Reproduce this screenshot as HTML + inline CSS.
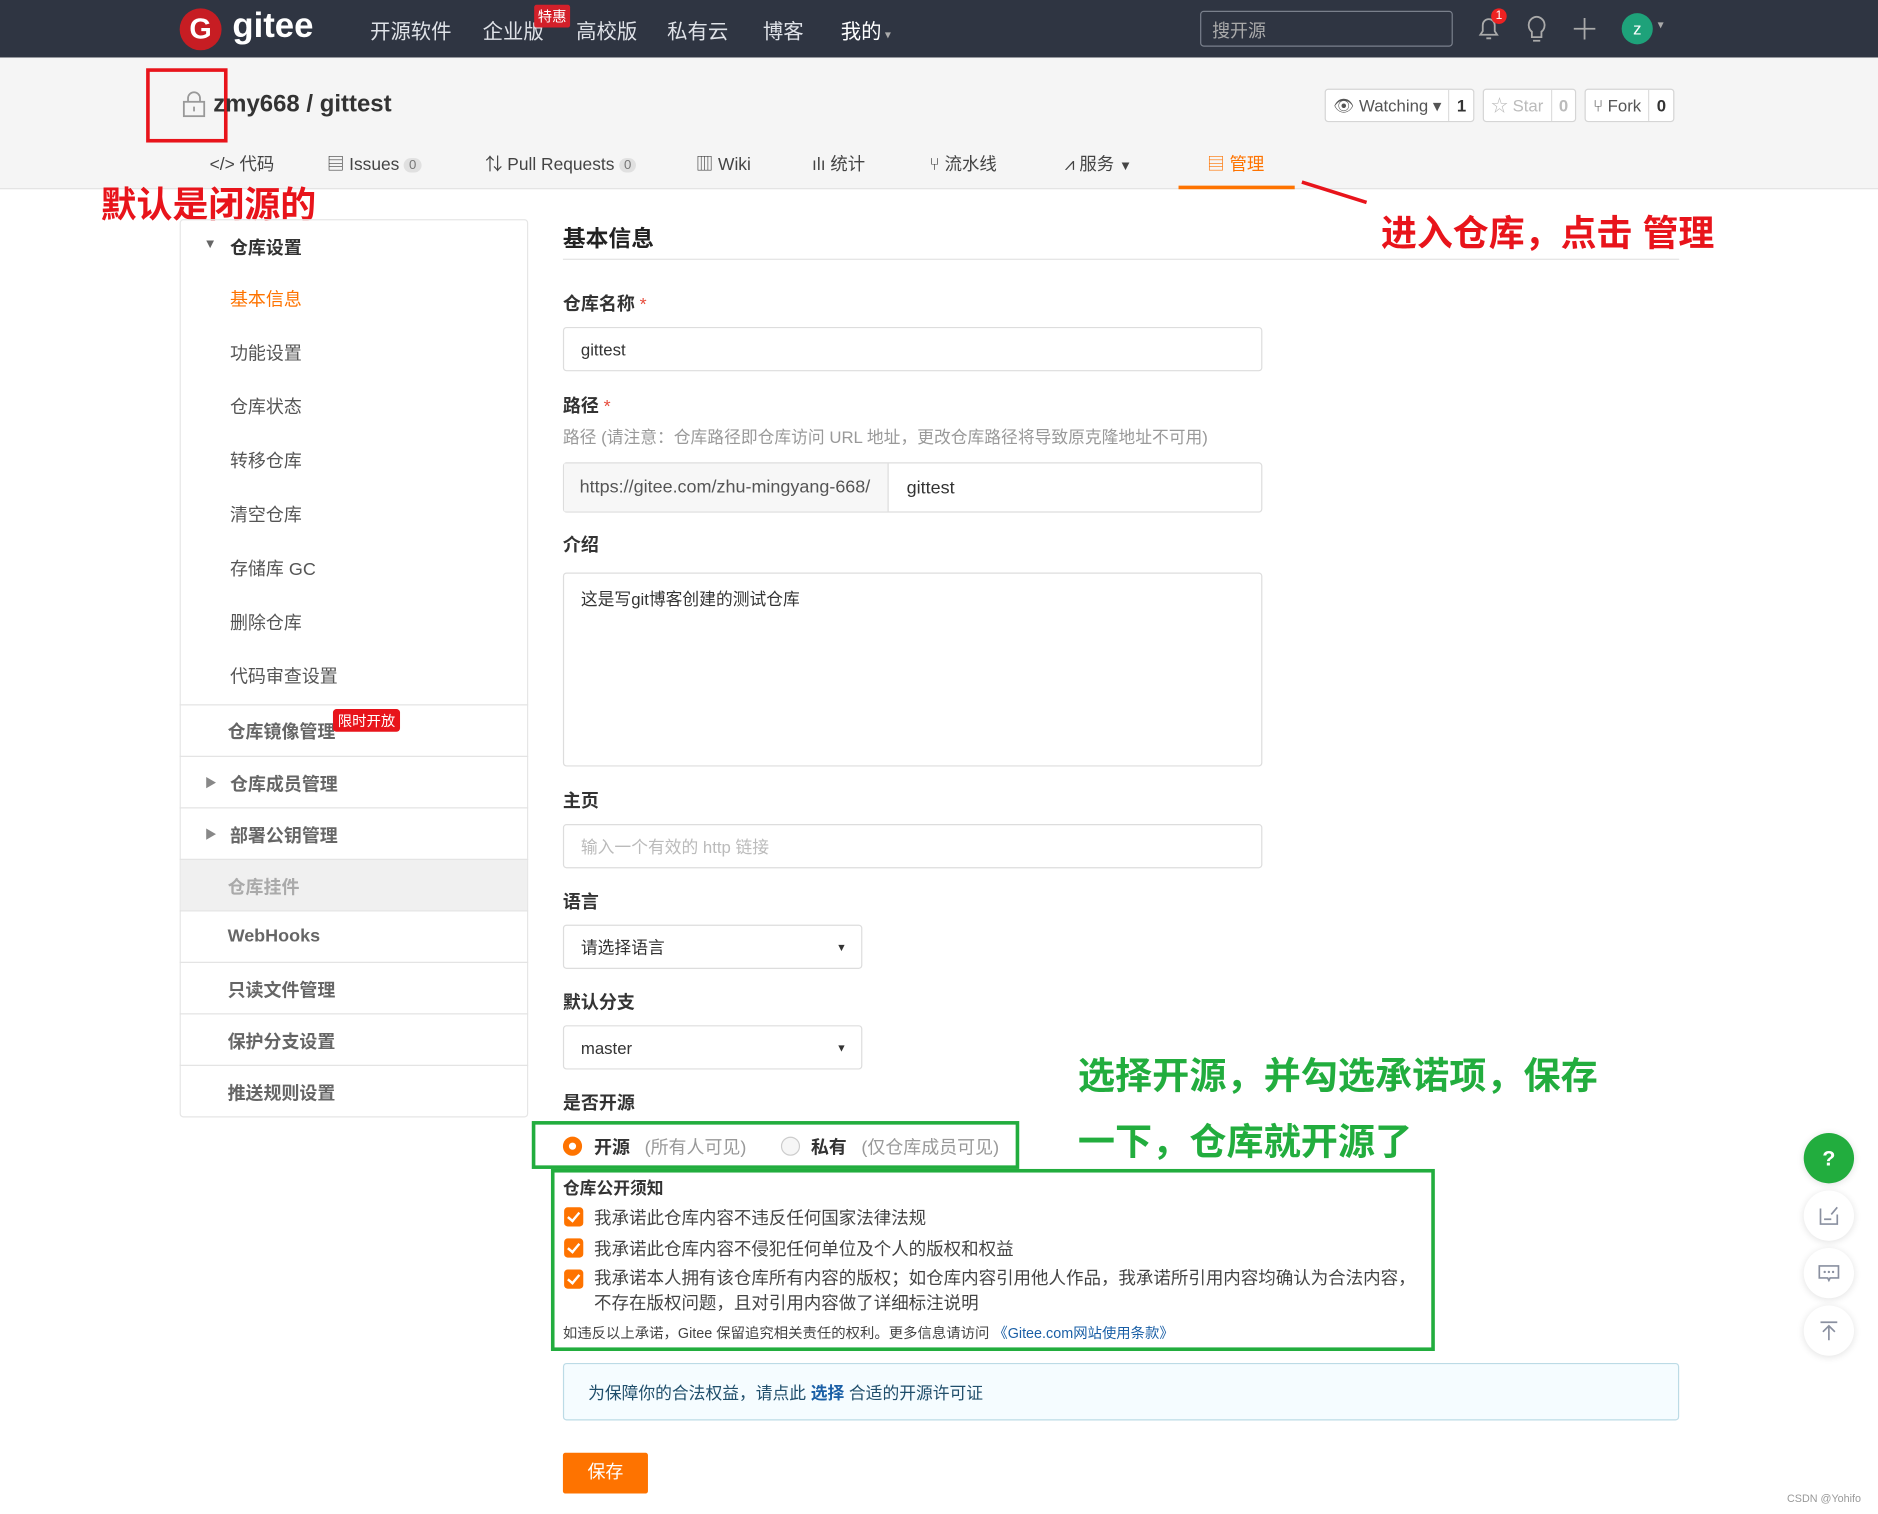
<!DOCTYPE html>
<html><head><meta charset="utf-8">
<style>
*{box-sizing:border-box;margin:0;padding:0}
html,body{width:1878px;height:1514px;overflow:hidden;background:#fff}
body{font-family:"Liberation Sans","Noto Sans CJK SC",sans-serif;color:#333}
#s{position:absolute;left:0;top:0;width:1568px;height:1264px;transform:scale(1.19770);transform-origin:0 0;background:#fff}
.a{position:absolute;white-space:nowrap}
.hd{left:0;top:0;width:1568px;height:48px;background:#2f3542}
.nav{color:#dfe2e8;font-size:17px;top:12px}
.sub{left:0;top:48px;width:1568px;height:110px;background:#f5f5f5;border-bottom:1px solid #e3e3e3}
.tab{top:126px;font-size:14.5px;color:#444}
.bdg{display:inline-block;background:#e0e0e0;border-radius:8px;font-size:11px;padding:0 4px;color:#777;margin-left:4px;vertical-align:1px}
.btn{border:1px solid #d5d5d5;background:#fff;height:28px;top:74px;font-size:14px;color:#555;display:flex;align-items:center;border-radius:3px}
.btn span{padding:0 6px;height:26px;line-height:26px}
.btn b{border-left:1px solid #ddd;padding:0 6px;line-height:26px;color:#333}
.sb{left:150px;top:183px;width:291px;height:750px;border:1px solid #e6e6e6;border-radius:3px}
.si{left:192px;font-size:15px;color:#555}
.sl{left:150px;width:291px;height:1px;background:#e3e3e3}
.sg{left:190px;font-size:15px;color:#666;font-weight:bold}
.lb{left:470px;font-size:15px;font-weight:bold;color:#333}
.st{color:#e74c3c;font-weight:normal;margin-left:4px}
.in{left:470px;width:584px;border:1px solid #ddd;border-radius:3px;font-size:14px;padding-left:14px;display:flex;align-items:center;color:#333}
.red{color:#e8141b;font-weight:bold;font-size:30px}
.grn{color:#22ad3e;font-weight:bold;font-size:31px}
.cb{width:16px;height:16px;background:#fe7300;border-radius:3px;left:471px}
.cb:after{content:"";position:absolute;left:5px;top:2px;width:4px;height:8px;border:solid #fff;border-width:0 2px 2px 0;transform:rotate(40deg)}
.ct{left:496px;font-size:14.6px;color:#444}
.fl{left:1506px;width:42px;height:42px;border-radius:50%;background:#fff;box-shadow:0 1px 6px rgba(0,0,0,.12);display:flex;align-items:center;justify-content:center}
</style></head><body><div id="s">
<div class="a hd"></div>
<div class="a" style="left:150px;top:7px;width:35px;height:35px;border-radius:50%;background:#c71d23;color:#fff;font-weight:bold;font-size:24px;text-align:center;line-height:35px">G</div>
<div class="a" style="left:194px;top:5px;color:#fff;font-weight:bold;font-size:29px;line-height:34px">gitee</div>
<div class="a nav" style="left:309px">开源软件</div>
<div class="a nav" style="left:403px">企业版</div>
<div class="a" style="left:446px;top:4px;background:#d3202a;color:#fff;font-size:12px;padding:1px 3px;border-radius:2px">特惠</div>
<div class="a nav" style="left:481px">高校版</div>
<div class="a nav" style="left:557px">私有云</div>
<div class="a nav" style="left:637px">博客</div>
<div class="a nav" style="left:702px;color:#fff">我的<span style="font-size:10px;color:#aaa"> ▾</span></div>
<div class="a" style="left:1002px;top:9px;width:211px;height:30px;border:1px solid #7a808c;border-radius:3px;color:#aaa;font-size:15px;padding:5px 9px">搜开源</div>
<svg class="a" style="left:1232px;top:12px" width="22" height="24" viewBox="0 0 22 24"><path d="M4 17h14l-2-3V9a5 5 0 0 0-10 0v5z M9 20h4" fill="none" stroke="#aaa" stroke-width="1.5"/></svg>
<div class="a" style="left:1245px;top:7px;width:13px;height:13px;border-radius:50%;background:#e22;color:#fff;font-size:10px;text-align:center;line-height:13px">1</div>
<svg class="a" style="left:1272px;top:12px" width="22" height="26" viewBox="0 0 22 26"><path d="M11 2a7 7 0 0 0-4 12.5V19h8v-4.5A7 7 0 0 0 11 2z M8 22h6" fill="none" stroke="#aaa" stroke-width="1.5"/></svg>
<svg class="a" style="left:1313px;top:14px" width="20" height="20"><path d="M10 1v18M1 10h18" stroke="#aaa" stroke-width="1.5"/></svg>
<div class="a" style="left:1354px;top:11px;width:26px;height:26px;border-radius:50%;background:#1ea27a;color:#fff;font-size:14px;text-align:center;line-height:26px">z</div>
<div class="a" style="left:1384px;top:16px;color:#aaa;font-size:10px">▾</div>

<div class="a sub"></div>
<div class="a" style="left:122px;top:57px;width:68px;height:62px;border:3px solid #e8141b"></div>
<svg class="a" style="left:152px;top:76px" width="20" height="22" viewBox="0 0 20 22"><rect x="1.5" y="9" width="17" height="12" fill="none" stroke="#999" stroke-width="1.5"/><path d="M5 9V6a5 5 0 0 1 10 0v3" fill="none" stroke="#999" stroke-width="1.5"/><path d="M10 13v4" stroke="#999" stroke-width="1.5"/></svg>
<div class="a" style="left:178px;top:76px;font-size:20px;font-weight:bold;color:#333">zmy668 / gittest</div>
<div class="a btn" style="left:1106px"><span>👁 Watching ▾</span><b>1</b></div>
<div class="a btn" style="left:1238px;color:#bbb"><span>☆ Star</span><b style="color:#bbb">0</b></div>
<div class="a btn" style="left:1323px"><span>⑂ Fork</span><b>0</b></div>
<div class="a tab" style="left:175px">&lt;/&gt; 代码</div>
<div class="a tab" style="left:273px">▤ Issues<span class="bdg">0</span></div>
<div class="a tab" style="left:405px">⇅ Pull Requests<span class="bdg">0</span></div>
<div class="a tab" style="left:581px">▥ Wiki</div>
<div class="a tab" style="left:678px">ılı 统计</div>
<div class="a tab" style="left:776px">⑂ 流水线</div>
<div class="a tab" style="left:889px">⩘ 服务 <span style="font-size:11px">▼</span></div>
<div class="a tab" style="left:1008px;color:#fe7300">▤ 管理</div>
<div class="a" style="left:984px;top:155px;width:97px;height:3px;background:#fe7300"></div>
<svg class="a" style="left:1085px;top:150px" width="60" height="22"><path d="M2 2L56 19" stroke="#e8141b" stroke-width="3"/></svg>
<div class="a red" style="left:84px;top:146px">默认是闭源的</div>
<div class="a red" style="left:1153px;top:170px">进入仓库，点击 管理</div>

<div class="a sb"></div>
<div class="a" style="left:170px;top:198px;font-size:11px;color:#666">▼</div>
<div class="a si" style="top:196px;color:#333;font-weight:bold">仓库设置</div>
<div class="a si" style="top:239px;color:#fe7300">基本信息</div>
<div class="a si" style="top:284px">功能设置</div>
<div class="a si" style="top:329px">仓库状态</div>
<div class="a si" style="top:374px">转移仓库</div>
<div class="a si" style="top:419px">清空仓库</div>
<div class="a si" style="top:464px">存储库 GC</div>
<div class="a si" style="top:509px">删除仓库</div>
<div class="a si" style="top:554px">代码审查设置</div>
<div class="a sl" style="top:588px"></div>
<div class="a sg" style="top:600px">仓库镜像管理</div>
<div class="a" style="left:278px;top:592px;background:#e8141b;color:#fff;font-size:12px;padding:1px 4px;border-radius:3px">限时开放</div>
<div class="a sl" style="top:631px"></div>
<div class="a" style="left:171px;top:645px;font-size:10px;color:#888">▶</div>
<div class="a sg" style="top:644px;left:192px">仓库成员管理</div>
<div class="a sl" style="top:674px"></div>
<div class="a" style="left:171px;top:688px;font-size:10px;color:#888">▶</div>
<div class="a sg" style="top:687px;left:192px">部署公钥管理</div>
<div class="a sl" style="top:717px"></div>
<div class="a" style="left:151px;top:718px;width:289px;height:42px;background:#f0f0f0"></div>
<div class="a sg" style="top:730px;color:#aaa">仓库挂件</div>
<div class="a sl" style="top:760px"></div>
<div class="a sg" style="top:773px">WebHooks</div>
<div class="a sl" style="top:803px"></div>
<div class="a sg" style="top:816px">只读文件管理</div>
<div class="a sl" style="top:846px"></div>
<div class="a sg" style="top:859px">保护分支设置</div>
<div class="a sl" style="top:889px"></div>
<div class="a sg" style="top:902px">推送规则设置</div>

<div class="a" style="left:470px;top:185px;font-size:19px;font-weight:bold;color:#222">基本信息</div>
<div class="a" style="left:470px;top:216px;width:932px;height:1px;background:#e3e3e3"></div>
<div class="a lb" style="top:243px">仓库名称<span class="st">*</span></div>
<div class="a in" style="top:273px;height:37px">gittest</div>
<div class="a lb" style="top:328px">路径<span class="st">*</span></div>
<div class="a" style="left:470px;top:355px;font-size:14px;color:#999">路径 (请注意：仓库路径即仓库访问 URL 地址，更改仓库路径将导致原克隆地址不可用)</div>
<div class="a in" style="top:386px;height:42px;padding-left:0"><div style="width:271px;height:40px;background:#f7f7f7;border-right:1px solid #ddd;line-height:40px;padding-left:13px;color:#555;font-size:15px">https://gitee.com/zhu-mingyang-668/</div><div style="padding-left:15px;font-size:15px">gittest</div></div>
<div class="a lb" style="top:444px">介绍</div>
<div class="a in" style="top:478px;height:162px;align-items:flex-start;padding-top:11px">这是写git博客创建的测试仓库</div>
<div class="a lb" style="top:658px">主页</div>
<div class="a in" style="top:688px;height:37px;color:#bbb">输入一个有效的 http 链接</div>
<div class="a lb" style="top:742px">语言</div>
<div class="a in" style="top:772px;height:37px;width:250px">请选择语言<span style="position:absolute;right:12px;font-size:9px">▼</span></div>
<div class="a lb" style="top:826px">默认分支</div>
<div class="a in" style="top:856px;height:37px;width:250px">master<span style="position:absolute;right:12px;font-size:9px">▼</span></div>
<div class="a lb" style="top:910px">是否开源</div>
<div class="a" style="left:444px;top:936px;width:407px;height:40px;border:3px solid #22ad3e"></div>
<div class="a" style="left:470px;top:949px;width:16px;height:16px;border-radius:50%;border:5px solid #fe7300;background:#fff"></div>
<div class="a" style="left:496px;top:947px;font-size:15px"><b>开源</b> <span style="color:#999;margin-left:8px">(所有人可见)</span></div>
<div class="a" style="left:652px;top:949px;width:16px;height:16px;border-radius:50%;border:1px solid #ccc;background:#f6f6f6"></div>
<div class="a" style="left:677px;top:947px;font-size:15px"><b>私有</b> <span style="color:#999;margin-left:8px">(仅仓库成员可见)</span></div>
<div class="a" style="left:460px;top:976px;width:738px;height:152px;border:3px solid #22ad3e"></div>
<div class="a lb" style="top:982px;font-size:14px">仓库公开须知</div>
<div class="a cb" style="top:1008px"></div><div class="a ct" style="top:1006px">我承诺此仓库内容不违反任何国家法律法规</div>
<div class="a cb" style="top:1034px"></div><div class="a ct" style="top:1032px">我承诺此仓库内容不侵犯任何单位及个人的版权和权益</div>
<div class="a cb" style="top:1060px"></div><div class="a ct" style="top:1058px;line-height:21px">我承诺本人拥有该仓库所有内容的版权；如仓库内容引用他人作品，我承诺所引用内容均确认为合法内容，<br>不存在版权问题，且对引用内容做了详细标注说明</div>
<div class="a" style="left:470px;top:1104px;font-size:12px;color:#444">如违反以上承诺，Gitee 保留追究相关责任的权利。更多信息请访问 <span style="color:#1a5fa6">《Gitee.com网站使用条款》</span></div>
<div class="a grn" style="left:900px;top:873px">选择开源，并勾选承诺项，保存</div>
<div class="a grn" style="left:900px;top:928px">一下，仓库就开源了</div>
<div class="a" style="left:470px;top:1138px;width:932px;height:48px;background:#f5fcff;border:1px solid #bcdbe6;border-radius:3px;font-size:14px;color:#1f4e6b;padding:14px 20px">为保障你的合法权益，请点此 <b style="color:#1a5fa6">选择</b> 合适的开源许可证</div>
<div class="a" style="left:470px;top:1213px;width:71px;height:34px;background:#fe7300;color:#fff;font-size:15px;text-align:center;line-height:34px;border-radius:2px">保存</div>

<div class="a fl" style="top:946px;background:#22ad3e;color:#fff;font-weight:bold;font-size:18px">?</div>
<div class="a fl" style="top:994px"><svg width="20" height="20"><path d="M3 4v13h14V9M6 13h6M12 9l5-6" fill="none" stroke="#8a90a0" stroke-width="1.4"/></svg></div>
<div class="a fl" style="top:1042px"><svg width="20" height="20"><path d="M2 4h16v10h-7l-1 2-1-2H2z" fill="none" stroke="#8a90a0" stroke-width="1.4"/><circle cx="6.5" cy="9" r="1" fill="#8a90a0"/><circle cx="10" cy="9" r="1" fill="#8a90a0"/><circle cx="13.5" cy="9" r="1" fill="#8a90a0"/></svg></div>
<div class="a fl" style="top:1090px"><svg width="20" height="20"><path d="M3 3h14M10 6v12M5 11l5-5 5 5" fill="none" stroke="#8a90a0" stroke-width="1.4"/></svg></div>
<div class="a" style="left:1492px;top:1246px;font-size:9px;color:#999">CSDN @Yohifo</div>
</div></body></html>
